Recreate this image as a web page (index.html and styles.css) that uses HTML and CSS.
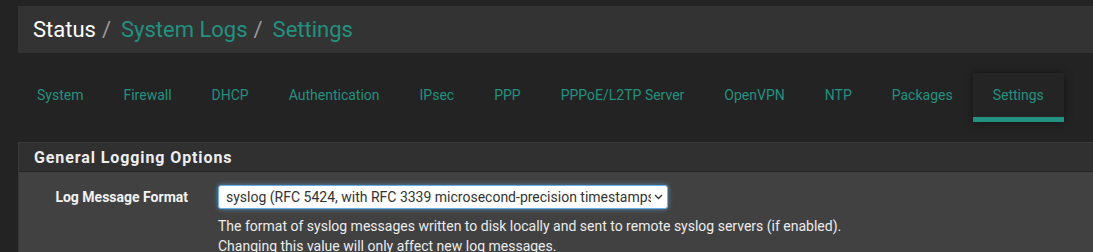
FILE: index.html
```html
<!DOCTYPE html>
<html lang="en">
<head>
<meta charset="utf-8">
<title>Status / System Logs / Settings</title>
<link rel="stylesheet" href="styles.css">
</head>
<body>
<div class="page">
  <header class="crumbs">
    <h1><span class="cur">Status</span><span class="sep">/</span><a href="#">System Logs</a><span class="sep">/</span><a href="#">Settings</a></h1>
  </header>
  <nav class="tabs">
    <a href="#">System</a>
    <a href="#">Firewall</a>
    <a href="#">DHCP</a>
    <a href="#">Authentication</a>
    <a href="#">IPsec</a>
    <a href="#">PPP</a>
    <a href="#">PPPoE/L2TP Server</a>
    <a href="#">OpenVPN</a>
    <a href="#">NTP</a>
    <a href="#">Packages</a>
    <a href="#" class="active">Settings</a>
  </nav>
  <section class="panel">
    <div class="panel-head">General Logging Options</div>
    <div class="panel-body">
      <div class="row">
        <label class="lbl">Log Message Format</label>
        <div class="field">
          <div class="select">
            <span class="sel-text">syslog (RFC 5424, with RFC 3339 microsecond-precision timestamps)</span>
            <svg class="caret" width="9" height="6" viewBox="0 0 9 6"><path d="M1 1l3.5 3.5L8 1" fill="none" stroke="#333" stroke-width="1.3"/></svg>
          </div>
          <p class="help">The format of syslog messages written to disk locally and sent to remote syslog servers (if enabled).<br>Changing this value will only affect new log messages.</p>
        </div>
      </div>
    </div>
  </section>
</div>
</body>
</html>
```

FILE: styles.css
```css
html, body {
  margin: 0;
  padding: 0;
  background: #232323;
  overflow: hidden;
}
body {
  font-family: Roboto, "Liberation Sans", sans-serif;
  color: #e0e0e0;
}
.page {
  padding: 6px 0 0 18px;
  width: 1120px;
}
.crumbs {
  background: #333333;
  height: 47px;
  display: flex;
  align-items: center;
  padding-left: 15px;
}
.crumbs h1 {
  margin: 0;
  font-size: 22px;
  font-weight: 400;
  line-height: 1;
  display: flex;
  align-items: baseline;
}
.crumbs .cur { color: #ffffff; }
.crumbs .sep { color: #9a9a9a; margin: 0 10px 0 6px; }
.crumbs a { color: #23917f; text-decoration: none; }

.tabs {
  display: flex;
  margin-top: 20px;
  margin-left: -1px;
  height: 49px;
}
.tabs a {
  display: flex;
  align-items: center;
  padding: 0 20px;
  font-size: 14px;
  color: #23917f;
  text-decoration: none;
  box-sizing: border-box;
  height: 44px;
}
.tabs a.active {
  height: 49px;
  border-bottom: 5px solid #23917f;
  box-shadow: 0 0 8px rgba(0,0,0,0.45);
  background: #242424;
}

.panel {
  margin-top: 20px;
  border: 1px solid #3a3a3a;
  border-right: none;
  background: #414141;
}
.panel-head {
  background: #303030;
  height: 28px;
  border-bottom: 1px solid #262626;
  padding-left: 15px;
  display: flex;
  align-items: center;
  font-size: 16px;
  font-weight: 700;
  letter-spacing: 0.9px;
  color: #eeeeee;
}
.panel-body {
  padding-top: 13px;
  height: 90px;
}
.row {
  display: flex;
}
.lbl {
  width: 169px;
  text-align: right;
  font-size: 14px;
  font-weight: 700;
  color: #f2f2f2;
  padding-top: 4px;
  box-sizing: border-box;
}
.field {
  margin-left: 30px;
}
.select {
  width: 450px;
  height: 24px;
  box-sizing: border-box;
  background: #ffffff;
  border: 1px solid #66afe9;
  border-radius: 3px;
  box-shadow: 0 0 5px rgba(102,175,233,0.7);
  display: flex;
  align-items: center;
  padding: 0 4px 0 7px;
  font-size: 14px;
  color: #333;
}
.sel-text {
  white-space: nowrap;
  overflow: hidden;
  flex: 1;
}
.caret { margin-left: 3px; flex: none; }
.help {
  margin: 7px 0 0 0;
  font-size: 14px;
  line-height: 20px;
  color: #ececec;
}
```
